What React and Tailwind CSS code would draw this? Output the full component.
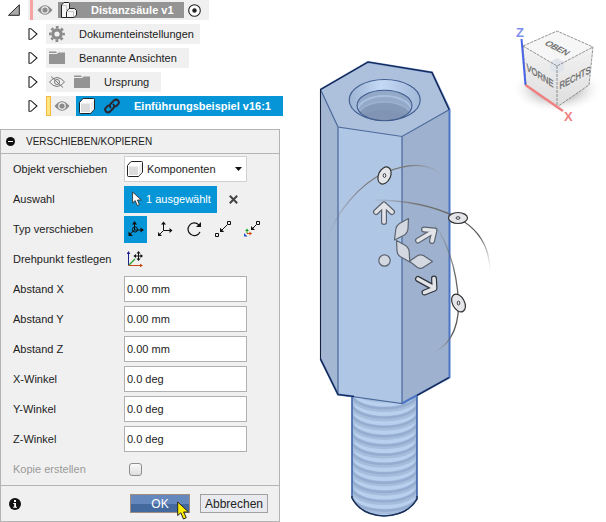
import React, { useState } from 'react';

const fields = [
  { id: 'dx', label: 'Abstand X', value: '0.00 mm' },
  { id: 'dy', label: 'Abstand Y', value: '0.00 mm' },
  { id: 'dz', label: 'Abstand Z', value: '0.00 mm' },
  { id: 'ax', label: 'X-Winkel', value: '0.0 deg' },
  { id: 'ay', label: 'Y-Winkel', value: '0.0 deg' },
  { id: 'az', label: 'Z-Winkel', value: '0.0 deg' },
];

const Eye = () => (
  <svg className="w-4 h-4 shrink-0" viewBox="0 0 16 16">
    <path d="M0.5 8Q8 -1.5 15.5 8Q8 17.5 0.5 8Z" fill="#8c8c8c" />
    <circle cx="8" cy="8" r="3.8" fill="#f0f0f0" />
    <circle cx="8" cy="8" r="2.6" fill="#8c8c8c" />
  </svg>
);

const EyeOff = () => (
  <svg className="w-4 h-4 shrink-0" viewBox="0 0 16 16" fill="none" stroke="#777" strokeWidth="1">
    <path d="M0.5 8Q8 -1 15.5 8Q8 17 0.5 8Z" />
    <circle cx="8" cy="8" r="2.5" />
    <path d="M2 2.5L14 13.5" />
  </svg>
);

const Folder = () => (
  <svg className="w-4 h-4 shrink-0" viewBox="0 0 16 16" fill="#949494">
    <path d="M0 1.5H7L8 3H0Z" />
    <path d="M0 4H8L9.5 2.5H16V14H0Z" />
  </svg>
);

const Gear = () => (
  <svg className="w-4 h-4 shrink-0" viewBox="0 0 16 16">
    <circle cx="8" cy="8" r="4.2" fill="none" stroke="#8a8a8a" strokeWidth="3.2" />
    <circle cx="8" cy="8" r="6.7" fill="none" stroke="#8a8a8a" strokeWidth="2.4" strokeDasharray="2.8 2.462" strokeDashoffset="1.4" />
  </svg>
);

const Box = () => (
  <svg className="w-4 h-4 shrink-0" viewBox="0 0 16 16">
    <path d="M0.5 4.5L3.5 1Q4 0.5 5 0.5H14.5Q15.5 0.5 15.5 1.5V11L12.5 14.5Q12 15.5 11 15.5H1.5Q0.5 15.5 0.5 14.5Z" fill="#fff" stroke="#222" />
    <path d="M2 5.5H11V14H2Z" fill="#dcdcdc" />
    <path d="M12 5L15 2V11L12 14Z" fill="#efefef" />
  </svg>
);

const Bodies = () => (
  <svg className="w-4 h-4 shrink-0" viewBox="0 0 16 16" fill="#f4f4f4" stroke="#222">
    <path d="M0.5 3L3 0.5H7.5L8.5 1.500V15.5H0.5Z" />
    <path d="M5.5 9.5L8 6.5H13.500L15.5 8.500V13L13 15.5H5.5Z" />
    <path d="M1 3.5H5.5V9.5M6 9.500H12.500V15" fill="none" stroke="#c4c4c4" />
  </svg>
);

const Chain = () => (
  <svg className="w-4 h-4 shrink-0" viewBox="0 0 16 16" fill="none" stroke="#2b2530" strokeWidth="2" strokeLinecap="round">
    <path d="M6.5 9.5Q5 7.5 6.7 5.8L10 2.4Q12 0.8 14 2.4Q15.8 4.6 14 6.4L11.8 8.4" />
    <path d="M9.5 6.5Q11 8.5 9.3 10.2L6 13.6Q4 15.2 2 13.6Q0.2 11.4 2 9.6L4.2 7.6" />
  </svg>
);

const Expand = () => (
  <svg className="w-[10px] h-3 shrink-0 mr-2" viewBox="0 0 10 12">
    <path d="M1 0.7H3L9 6L3 11.3H1Z" fill="#fff" stroke="#222" strokeWidth="1.1" />
  </svg>
);

const Tree = () => (
  <div className="flex flex-col gap-1 w-[283px] text-[11px] text-[#222]">
    <div className="flex items-center h-5 pl-2">
      <svg className="w-3 h-3 mr-2" viewBox="0 0 12 12">
        <path d="M0.5 11.3H11.3V0.8Z" fill="#aaa" stroke="#222" />
      </svg>
      <div className="flex items-center h-5 bg-[#f0f0f0] pl-[2px] pr-2">
        <span className="w-[3px] h-5 bg-[#f5a3a3] mr-1" />
        <Eye />
        <div className="flex items-center h-4 w-[126px] ml-[5px] pl-[3px] gap-[14px] bg-[#949494] text-white font-bold whitespace-nowrap">
          <Bodies />
          Distanzsäule v1
        </div>
        <svg className="w-[13px] h-[13px] ml-1" viewBox="0 0 13 13">
          <circle cx="6.5" cy="6.5" r="5.8" fill="#fff" stroke="#222" strokeWidth="1.1" />
          <circle cx="6.5" cy="6.5" r="2.2" fill="#222" />
        </svg>
      </div>
    </div>
    <div className="flex items-center h-5 pl-7">
      <Expand />
      <div className="flex items-center h-5 bg-[#f0f0f0] pl-[3px] pr-[6px] gap-[14px]">
        <Gear />
        Dokumenteinstellungen
      </div>
    </div>
    <div className="flex items-center h-5 pl-7">
      <Expand />
      <div className="flex items-center h-5 bg-[#f0f0f0] pl-[3px] pr-3 gap-[14px]">
        <Folder />
        Benannte Ansichten
      </div>
    </div>
    <div className="flex items-center h-5 pl-7">
      <Expand />
      <div className="flex items-center h-5 bg-[#f0f0f0] pl-[3px] pr-3">
        <EyeOff />
        <span className="flex items-center gap-[14px] ml-[9px]">
          <Folder />
          Ursprung
        </span>
      </div>
    </div>
    <div className="flex items-center h-5 pl-7">
      <Expand />
      <div className="flex items-center h-5 w-[30px] bg-[#f0f0f0]">
        <span className="w-[5px] h-5 bg-[#ffe680] border border-[#f5b942] mr-[3px]" />
        <Eye />
      </div>
      <div className="flex items-center h-5 grow bg-[#0696d7] text-white font-bold pl-[3px] whitespace-nowrap">
        <Box />
        <span className="flex items-center gap-[14px] ml-[9px]">
          <Chain />
          Einführungsbeispiel v16:1
        </span>
      </div>
    </div>
  </div>
);

const FreeMove = () => (
  <svg className="w-4 h-4" viewBox="0 0 16 16" fill="none" stroke="#111">
    <path d="M6.5 9V2M6.5 9H14M6.5 9L2 13" />
    <circle cx="7" cy="8.5" r="2.6" />
    <path d="M6.5 0L9 3.5H4ZM16 9L12.5 6.5V11.5ZM0.5 15V10.5L5 15Z" fill="#111" stroke="none" />
  </svg>
);

const Translate = () => (
  <svg className="w-4 h-4" viewBox="0 0 16 16" fill="none" stroke="#111">
    <path d="M6.5 9.5V2M6.5 9.5H14M6.5 9.5L2 14" />
    <path d="M6.5 0.5L9 3.5H4ZM15.5 9.5L12.5 7V12ZM1 15V11L5 15Z" fill="#111" stroke="none" />
  </svg>
);

const Rotate = () => (
  <svg className="w-4 h-4" viewBox="0 0 16 16" fill="none" stroke="#111" strokeWidth="1.2">
    <path d="M12.8 3.8A6.3 6.3 0 1 0 14 11" />
    <path d="M15 1V6H10Z" fill="#111" stroke="none" />
  </svg>
);

const PointToPoint = () => (
  <svg className="w-4 h-4" viewBox="0 0 16 16" fill="none" stroke="#111">
    <path d="M12.5 0.5H15.5V3.5H12.5ZM0.5 12.5H3.5V15.5H0.5ZM12 4L7 9" />
    <path d="M5 11V6.8L9.2 11Z" fill="#111" stroke="none" />
  </svg>
);

const PointToPosition = () => (
  <svg className="w-4 h-4" viewBox="0 0 16 16" fill="none" stroke="#111">
    <path d="M12.5 0.5H15.5V3.5H12.5ZM12 4L9 7" />
    <path d="M7 9V5L11 9Z" fill="#111" stroke="none" />
    <path d="M3 12.5V9" stroke="#1ca01c" />
    <path d="M3 7.5L5 10H1Z" fill="#1ca01c" stroke="none" />
    <path d="M3 12.5H6" stroke="#d04a10" />
    <path d="M8 12.5L5.5 10.5V14.5Z" fill="#d04a10" stroke="none" />
    <path d="M0 15.5V12L3.5 15.5Z" fill="#2a50c8" stroke="none" />
  </svg>
);

const Pivot = () => (
  <svg className="w-4 h-4" viewBox="0 0 16 16" fill="none">
    <path d="M1.5 14.5V2" stroke="#20208c" />
    <path d="M1.5 0L3.3 3H-0.3Z" fill="#20208c" />
    <path d="M1.5 14.5H14" stroke="#c84614" />
    <path d="M16 14.5L13 12.7V16.3Z" fill="#c84614" />
    <path d="M2 14L8 8" stroke="#28a028" strokeWidth="1.2" />
    <path d="M11.5 1V9M7.5 5H15" stroke="#111" />
    <path d="M11.5 0L13.500 2.5H9.500ZM11.5 10L13.500 7.5H9.500ZM6.500 5L9 3V7ZM16 5L13.5 3V7Z" fill="#111" />
  </svg>
);

const moveTypes = [
  { name: 'Freies Verschieben', Icon: FreeMove },
  { name: 'Verschiebung', Icon: Translate },
  { name: 'Drehen', Icon: Rotate },
  { name: 'Punkt zu Punkt', Icon: PointToPoint },
  { name: 'Punkt zu Position', Icon: PointToPosition },
];

const Row = ({ id, label, muted, children }) => (
  <div className="flex items-center h-[30px] pl-3">
    {id ? (
      <label htmlFor={id} className={muted ? 'w-[111px] text-[#9a9a9a]' : 'w-[111px]'}>
        {label}
      </label>
    ) : (
      <span className="w-[111px]">{label}</span>
    )}
    {children}
  </div>
);

const MovePanel = () => {
  const [values, setValues] = useState(fields.map((f) => f.value));
  const [type, setType] = useState(0);

  return (
    <div className="w-[280px] mt-[13px] border border-[#b4b4b4] bg-[#f0f0f0] text-[11px] text-[#222]">
      <div className="flex items-center h-6 pl-[5px] gap-[11px] border-b border-[#b4b4b4] text-[10px]">
        <svg className="w-[9px] h-[9px]" viewBox="0 0 9 9">
          <circle cx="4.5" cy="4.5" r="4.5" fill="#111" />
          <path d="M2 4.5H7" stroke="#fff" />
        </svg>
        VERSCHIEBEN/KOPIEREN
      </div>
      <Row id="object" label="Objekt verschieben">
        <div className="relative flex items-center w-[123px] h-[26px] bg-white border border-[#d0d0d0]">
          <span className="absolute left-[2px] pointer-events-none">
            <Box />
          </span>
          <select id="object" className="w-full h-full appearance-none pl-[22px] bg-transparent">
            <option>Komponenten</option>
          </select>
          <svg className="absolute right-1 w-[7px] h-1 pointer-events-none" viewBox="0 0 7 4">
            <path d="M0 0H7L3.5 4Z" fill="#111" />
          </svg>
        </div>
      </Row>
      <Row label="Auswahl">
        <button className="flex items-center w-[93px] h-[27px] pl-2 gap-1 bg-[#0696d7] text-white whitespace-nowrap">
          <svg className="w-[10px] h-4" viewBox="0 0 10 16">
            <path d="M0.6 1V12L3.2 9.6L5.2 14.6L7.4 13.7L5.4 9H9.3Z" fill="#fff" stroke="#333" strokeWidth="0.9" />
          </svg>
          1 ausgewählt
        </button>
        <button aria-label="Auswahl aufheben" className="ml-3">
          <svg className="w-[9px] h-[9px]" viewBox="0 0 9 9" stroke="#444" strokeWidth="2">
            <path d="M0.8 0.8L8.2 8.2M8.2 0.8L0.8 8.2" />
          </svg>
        </button>
      </Row>
      <Row label="Typ verschieben">
        <div className="flex gap-[6px]">
          {moveTypes.map(({ name, Icon }, i) => (
            <button
              key={name}
              aria-label={name}
              onClick={() => setType(i)}
              className={
                i === type
                  ? 'flex items-center justify-center w-[23px] h-[27px] bg-[#0696d7]'
                  : 'flex items-center justify-center w-[23px] h-[27px]'
              }
            >
              <Icon />
            </button>
          ))}
        </div>
      </Row>
      <Row label="Drehpunkt festlegen">
        <button aria-label="Drehpunkt festlegen" className="ml-[3px]">
          <Pivot />
        </button>
      </Row>
      {fields.map((f, i) => (
        <Row key={f.id} id={f.id} label={f.label}>
          <input
            id={f.id}
            value={values[i]}
            onChange={(e) => setValues(values.map((v, j) => (j === i ? e.target.value : v)))}
            className="w-[123px] h-[26px] px-[2px] bg-white border border-[#b0b0b0]"
          />
        </Row>
      ))}
      <Row id="copy" label="Kopie erstellen" muted>
        <input
          id="copy"
          type="checkbox"
          disabled
          className="appearance-none w-[13px] h-[13px] ml-[5px] rounded-[3px] border border-[#8e8e8e] bg-linear-to-b from-[#fafafa] to-[#dedede]"
        />
      </Row>
      <div className="flex items-center h-9 mt-px pl-2 pr-[11px] border-t border-[#b4b4b4] text-[12px]">
        <svg className="w-3 h-3" viewBox="0 0 12 12">
          <circle cx="6" cy="6" r="6" fill="#111" />
          <path d="M5 2H7V4H5ZM4.3 5H7V8.7H8V9.8H4.2V8.7H5.2V6H4.3Z" fill="#fff" />
        </svg>
        <button className="relative w-[60px] h-[19px] ml-auto border border-[#a08c80] bg-linear-to-b from-[#6487bd] from-50% to-[#44699f] to-50% text-white leading-4">
          OK
          <svg className="absolute left-[46px] top-[6px] w-[13px] h-[20px]" viewBox="0 0 13 20">
            <path d="M0.7 1V14.5L3.8 11.8L6.5 18L9.3 16.7L6.6 11H11.5Z" fill="#ffee00" stroke="#222" />
          </svg>
        </button>
        <button className="w-[68px] h-[19px] ml-[10px] border border-[#a0a0a0] bg-[#e8eaf0] leading-4">Abbrechen</button>
      </div>
    </div>
  );
};

const rings = [0, 1, 2, 3, 4, 5, 6, 7, 8, 9, 10, 11, 12];

// move arrows of the manipulator: a dark wide stroke with a light one on top
const arrows = [
  { d: 'M384 222V205M376 212L384 204.5L392 212', edge: '#5c6470' },
  { d: 'M418 240.500L433 231.500M424 229.500L434.500 230.500L432 241', edge: '#5c6470' },
  { d: 'M418 279L433.500 287.500M434 278.500L434.500 288.500L424.500 292.500', edge: '#30343d' },
];

const Model = () => (
  <svg className="w-[200px] h-[522px] shrink-0" viewBox="306 0 200 522" fill="none">
    <defs>
      <clipPath id="shaft">
        <path d="M352 392H417V499Q408 515 384 516Q361 515 352 499Z" />
      </clipPath>
      <clipPath id="bore">
        <ellipse cx="384.5" cy="105.5" rx="27.5" ry="15.2" />
      </clipPath>
      <linearGradient id="chamfer" x1="349" x2="420" y1="0" y2="0" gradientUnits="userSpaceOnUse">
        <stop offset="0" stopColor="#9db4d2" />
        <stop offset="0.45" stopColor="#c3d9f6" />
        <stop offset="1" stopColor="#a3b9d8" />
      </linearGradient>
      <linearGradient id="arcA" x1="326" x2="444" y1="0" y2="0" gradientUnits="userSpaceOnUse">
        <stop offset="0" stopColor="#777" stopOpacity="0" />
        <stop offset="0.35" stopColor="#777" />
        <stop offset="0.7" stopColor="#777" />
        <stop offset="1" stopColor="#999" stopOpacity="0" />
      </linearGradient>
      <linearGradient id="arcB" x1="372" x2="491" y1="200" y2="270" gradientUnits="userSpaceOnUse">
        <stop offset="0" stopColor="#777" stopOpacity="0" />
        <stop offset="0.3" stopColor="#777" />
        <stop offset="0.8" stopColor="#555" />
        <stop offset="1" stopColor="#999" stopOpacity="0" />
      </linearGradient>
      <linearGradient id="arcC" x1="0" x2="0" y1="220" y2="355" gradientUnits="userSpaceOnUse">
        <stop offset="0" stopColor="#777" stopOpacity="0" />
        <stop offset="0.4" stopColor="#666" />
        <stop offset="0.85" stopColor="#555" />
        <stop offset="1" stopColor="#999" stopOpacity="0" />
      </linearGradient>
    </defs>

    <g clipPath="url(#shaft)">
      <path d="M352 390H417V520H352Z" fill="#b9d0ef" />
      {rings.map((i) => (
        <g key={i} transform={`translate(0 ${i * 9.3})`}>
          <path d="M351 385A33.500 15 0 0 0 418 385" stroke="#a6bddc" strokeWidth="5.500" />
          <path d="M351 384A33.500 15 0 0 0 418 384" stroke="#95add0" strokeWidth="2.400" />
        </g>
      ))}
    </g>
    <path d="M352 396V498Q361 515 384 516Q408 515 417 499V396" stroke="#3c64a8" strokeWidth="1.6" />
    <path d="M352 496V498Q361 515 384 516Q408 515 417 499V496" stroke="#1c2a48" strokeWidth="1.2" />

    <path d="M320.500 89.500L338 127V394.500L320.500 359Z" fill="#a3b7d3" />
    <path d="M338 127L402 136.500V403.500L338 394.500Z" fill="#b0c6e5" />
    <path d="M402 136.500L449.500 109.500V377.500L402 403.500Z" fill="#9eb2cf" />
    <path d="M320.500 89.500L368 62L432 72.500L449.500 109.500L402 136.500L338 127Z" fill="#adc0dc" />
    <path d="M320.500 89.500L338 127L402 136.500L449.500 109.500M338 127V394.500L402 403.500V136.500" stroke="#4a689c" strokeWidth="1.2" />
    <path d="M320.500 359L338 394.500L354 396.500M402 403.500L449.500 377.500V109.500L432 72.500L368 62L320.500 89.500" stroke="#4a74c4" strokeWidth="2" />
    <path d="M449 109.500L432 72.500L368 62L320.500 89.500V359L338 394.500L354 396.500M417 395.500L449 377.500" stroke="#14203c" strokeWidth="1.1" />

    <ellipse cx="384.700" cy="100" rx="35.500" ry="20.500" fill="url(#chamfer)" stroke="#405c8e" strokeWidth="1.1" />
    <g clipPath="url(#bore)">
      <path d="M355 88H414V122H355Z" fill="#94a9c8" />
      <ellipse cx="384.500" cy="111" rx="27" ry="15" stroke="#a9bfdf" strokeWidth="2" />
      <ellipse cx="384.500" cy="117" rx="27" ry="15" fill="#8498b8" stroke="#9cb1d0" strokeWidth="1.500" />
      <ellipse cx="384.500" cy="124" rx="26" ry="14" fill="#8194b3" />
    </g>
    <ellipse cx="384.500" cy="105.500" rx="27.500" ry="15.200" stroke="#405c8e" strokeWidth="1.1" />

    <path d="M327 240C336 212 360 184 384 173C410 162 430 162 444 177" stroke="url(#arcA)" strokeWidth="1.200" />
    <path d="M372 200C405 200 435 206 458 218C480 230 490 248 490 272" stroke="url(#arcB)" strokeWidth="1.300" />
    <path d="M428 216C446 236 457 268 458.500 303C459 330 448 350 426 355" stroke="url(#arcC)" strokeWidth="1.300" />
    <g fill="#e4e6ea" stroke="#333" strokeWidth="1.200">
      <ellipse cx="384.500" cy="175.500" rx="6" ry="9" transform="rotate(25 384.500 175.500)" />
      <ellipse cx="458" cy="218" rx="9.500" ry="5.500" />
      <ellipse cx="458.500" cy="303" rx="6" ry="9.500" transform="rotate(-28 458.500 303)" />
      <ellipse cx="384.500" cy="175.500" rx="1.300" ry="2" strokeWidth="0.900" />
      <ellipse cx="458" cy="218" rx="2" ry="1.300" strokeWidth="0.900" />
      <ellipse cx="458.500" cy="303" rx="1.300" ry="2" strokeWidth="0.900" />
    </g>
    <g fill="#d4d9e1" stroke="#5c6470" strokeWidth="1.200" strokeLinejoin="round">
      <path d="M408.500 218.500L399.500 223.500Q396.500 225.500 395.800 229L394.500 240L404.500 235Q407.500 233 408 229Z" />
      <path d="M396.500 240.500L405.500 245.500Q409 248 409.200 252L409.800 262L400 256.500Q397.300 254.500 397 251Z" />
      <path d="M409.500 261.300L417 256Q420 254 423.500 255.500L432.500 261.500L424 267Q420.500 269.500 417.500 267.500Z" />
      <circle cx="384.500" cy="260.500" r="5.700" />
    </g>
    {arrows.map(({ d, edge }) => (
      <g key={d} strokeLinejoin="round" strokeLinecap="round">
        <path d={d} stroke={edge} strokeWidth="6" />
        <path d={d} stroke="#e2e4e8" strokeWidth="3.600" />
      </g>
    ))}
  </svg>
);

const ViewCube = () => (
  <svg className="w-[100px] h-[130px] shrink-0" viewBox="506 0 100 130" fill="none">
    <defs>
      <radialGradient id="ground">
        <stop offset="0.4" stopColor="#bdbdbd" />
        <stop offset="1" stopColor="#fff" stopOpacity="0" />
      </radialGradient>
      <linearGradient id="side" x1="0" x2="0" y1="46" y2="107" gradientUnits="userSpaceOnUse">
        <stop offset="0" stopColor="#f2f2f2" />
        <stop offset="1" stopColor="#dedede" />
      </linearGradient>
    </defs>
    <ellipse cx="557" cy="89" rx="46" ry="24" fill="url(#ground)" />
    <path d="M523 46L557 31L593 47L557 66Z" fill="#f6f6f6" />
    <path d="M523 46L557 66V107L526 85Z" fill="url(#side)" />
    <path d="M557 66L593 47L589 85L557 107Z" fill="url(#side)" />
    <path d="M550 62L557 58L564 62V70L557 74L550 70Z" fill="#dfe3ea" />
    <path d="M523 46L557 31L593 47L589 85L557 107L526 85ZM523 46L557 66L593 47M557 66V107" stroke="#777" strokeWidth="0.800" strokeDasharray="3 1" />
    <path d="M521.500 39L525.500 85" stroke="#4a64e8" strokeWidth="2" />
    <path d="M525.500 85L563 111" stroke="#f08080" strokeWidth="2.500" />
    <g fontFamily="Liberation Sans, sans-serif">
      <text x="516" y="37" fontSize="13" fontWeight="bold" fill="#7f8ff0">Z</text>
      <text x="564" y="121" fontSize="13" fontWeight="bold" fill="#f08080">X</text>
      <g fontSize="9" fill="#6c6c6c" stroke="#6c6c6c" strokeWidth="0.300" textAnchor="middle">
        <text transform="matrix(0.87 0.45 -0.75 0.6 555 50)">OBEN</text>
        <text transform="matrix(0.84 0.54 0 1.1 540 79)">VORNE</text>
        <text transform="matrix(0.84 -0.45 0 1.1 575 81)">RECHTS</text>
      </g>
    </g>
  </svg>
);

const App = () => (
  <div className="flex items-start bg-white font-['Liberation_Sans',Arial,sans-serif]">
    <div className="w-[306px] shrink-0">
      <Tree />
      <MovePanel />
    </div>
    <Model />
    <ViewCube />
  </div>
);

export default App;
